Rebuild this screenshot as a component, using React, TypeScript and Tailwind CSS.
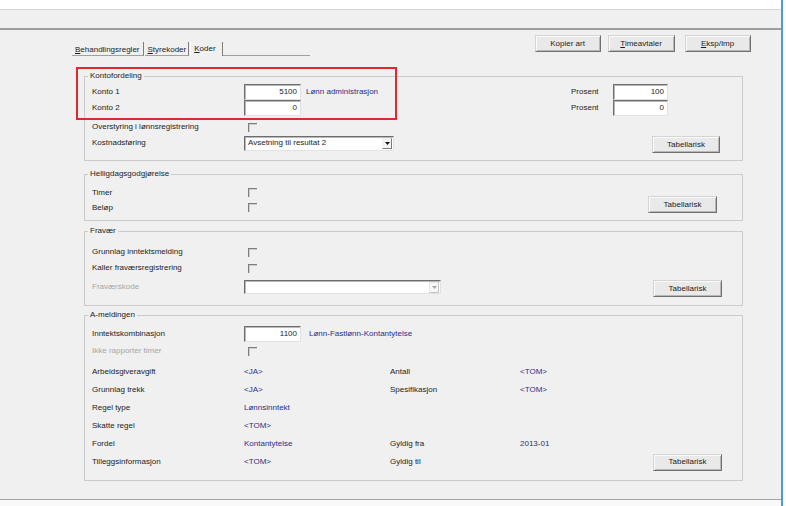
import React from "react";

const blue = "text-[#2b2d8c]";

function Btn({ label, className = "" }: { label: React.ReactNode; className?: string }) {
  return (
    <div
      className={`flex h-[17px] items-center justify-center border border-[#d4d4d4] border-r-[#707070] border-b-[#707070] bg-[#e9e9e9] shadow-[inset_1px_1px_0_#fbfbfb,inset_-1px_-1px_0_#b8b8b8] ${className}`}
    >
      {label}
    </div>
  );
}

function Field({ value, className = "" }: { value: string; className?: string }) {
  return (
    <div
      className={`flex h-[16px] shrink-0 items-center justify-end border border-[#e2e2e2] border-t-[#6d6d6d] border-l-[#6d6d6d] bg-white pr-[3px] shadow-[inset_1px_1px_0_#b9b9b9] ${className}`}
    >
      {value}
    </div>
  );
}

function Check({ className = "" }: { className?: string }) {
  return (
    <div
      className={`h-[9px] w-[9px] shrink-0 border-t border-l border-[#7d7d7d] shadow-[inset_1px_1px_0_#cfcfcf] ${className}`}
    />
  );
}

function Select({ value, className = "", disabled = false }: { value?: string; className?: string; disabled?: boolean }) {
  return (
    <div
      className={`flex shrink-0 items-center border border-[#e2e2e2] border-t-[#6d6d6d] border-l-[#6d6d6d] bg-white shadow-[inset_1px_1px_0_#b9b9b9] ${className}`}
    >
      <span className="flex-1 pl-[3px]">{value}</span>
      <div
        className={`mr-[1px] flex h-[11px] w-[10px] items-center justify-center border ${
          disabled
            ? "border-[#e6e6e6] border-r-[#c4c4c4] border-b-[#c4c4c4] bg-[#f7f7f7]"
            : "border-[#f0f0f0] border-r-[#7a7a7a] border-b-[#7a7a7a] bg-[#f4f4f4]"
        }`}
      >
        <svg width="5" height="3" viewBox="0 0 5 3">
          <polygon points="0,0 5,0 2.5,3" fill={disabled ? "#a8a8a8" : "#111"} />
        </svg>
      </div>
    </div>
  );
}

function Label({ children, dim = false }: { children: React.ReactNode; dim?: boolean }) {
  return <div className={`w-[152px] shrink-0 ${dim ? "text-[#a6a6a6]" : ""}`}>{children}</div>;
}

function Group({ title, className = "", children }: { title: string; className?: string; children: React.ReactNode }) {
  return (
    <fieldset className={`ml-[84px] w-[659px] border border-[#cbcbcb] ${className}`}>
      <legend className="ml-[3px] px-[2px] leading-[12px]">{title}</legend>
      {children}
    </fieldset>
  );
}

function InfoRow({
  label,
  value,
  label2,
  value2,
  button,
  className = "",
}: {
  label: string;
  value?: string;
  label2?: string;
  value2?: string;
  button?: boolean;
  className?: string;
}) {
  return (
    <div className={`flex h-[18px] items-center ${className}`}>
      <Label>{label}</Label>
      <div className={`w-[146px] shrink-0 ${blue}`}>{value}</div>
      <div className="w-[130px] shrink-0">{label2}</div>
      <div className={`w-[133px] shrink-0 ${blue}`}>{value2}</div>
      {button && <Btn label="Tabellarisk" className="w-[69px]" />}
    </div>
  );
}

export default function App() {
  return (
    <div className="flex h-[506px] w-[786px] bg-white font-['Liberation_Sans',Arial,sans-serif] text-[8px] leading-none text-[#1c1c1c]">
      <div className="flex w-[783px] shrink-0 flex-col border-r-2 border-[#4c9be0]">
        <div className="h-[10px] border-b border-[#d6d6d6] bg-white" />
        <div className="h-[20px] border-b-2 border-[#9d9d9d] bg-[#f0f0f0]" />

        <div className="relative h-[470px] border-b border-[#a3a3a3] bg-[#f0f0f0]">
          {/* header: tabs + buttons */}
          <div className="flex h-[40px] items-start">
            <div className="ml-[72px] mt-[12px] flex h-[14px] items-stretch">
              <div className="flex items-center border-b border-r border-[#a0a0a0] border-r-[#7c7c7c] pl-[3px] pr-[3px] pt-[2px]">
                <span>
                  <u>B</u>ehandlingsregler
                </span>
              </div>
              <div className="ml-[1px] flex items-center border-b border-r border-[#a0a0a0] border-r-[#7c7c7c] pl-[3px] pr-[2px] pt-[2px]">
                <span>
                  <u>S</u>tyrekoder
                </span>
              </div>
              <div className="ml-[1px] flex items-start border-r border-l border-l-white border-r-[#7c7c7c] pl-[3px] pr-[6px] pt-[3px]">
                <span>
                  <u>K</u>oder
                </span>
              </div>
              <div className="w-[87px] border-b border-[#a0a0a0]" />
            </div>

            <div className="ml-[225px] mt-[5px] flex">
              <Btn label="Kopier art" className="w-[66px]" />
              <Btn
                label={
                  <span>
                    <u>T</u>imeavtaler
                  </span>
                }
                className="ml-[7px] w-[67px]"
              />
              <Btn
                label={
                  <span>
                    <u>E</u>ksp/Imp
                  </span>
                }
                className="ml-[10px] w-[66px]"
              />
            </div>
          </div>

          {/* Kontofordeling */}
          <Group title="Kontofordeling">
            <div className="flex pb-[7px] pl-[7px] pt-[2px]">
              <div className="w-[479px] shrink-0">
                <div className="flex h-[16px] items-center">
                  <Label>Konto 1</Label>
                  <Field value="5100" className="w-[57px]" />
                  <span className={`ml-[5px] ${blue}`}>Lønn administrasjon</span>
                </div>
                <div className="flex h-[16px] items-center">
                  <Label>Konto 2</Label>
                  <Field value="0" className="w-[57px]" />
                </div>
                <div className="mt-[3px] flex h-[16px] items-center">
                  <Label>Overstyring i lønnsregistrering</Label>
                  <Check className="ml-[4px]" />
                </div>
                <div className="flex h-[16px] items-center">
                  <Label>Kostnadsføring</Label>
                  <Select value="Avsetning til resultat 2" className="h-[15px] w-[150px]" />
                </div>
              </div>
              <div>
                <div className="flex h-[16px] items-center">
                  <span className="w-[42px] shrink-0">Prosent</span>
                  <Field value="100" className="w-[55px]" />
                </div>
                <div className="flex h-[16px] items-center">
                  <span className="w-[42px] shrink-0">Prosent</span>
                  <Field value="0" className="w-[55px]" />
                </div>
                <Btn label="Tabellarisk" className="ml-[81px] mt-[20px] w-[68px]" />
              </div>
            </div>
          </Group>

          {/* Helligdagsgodgjørelse */}
          <Group title="Helligdagsgodgjørelse" className="mt-[7px]">
            <div className="flex pb-[5px] pl-[7px] pt-[5px]">
              <div className="w-[479px] shrink-0">
                <div className="flex h-[15px] items-center">
                  <Label>Timer</Label>
                  <Check className="ml-[4px]" />
                </div>
                <div className="flex h-[15px] items-center">
                  <Label>Beløp</Label>
                  <Check className="ml-[4px]" />
                </div>
              </div>
              <div>
                <Btn label="Tabellarisk" className="ml-[77px] mt-[11px] w-[69px]" />
              </div>
            </div>
          </Group>

          {/* Fravær */}
          <Group title="Fravær" className="mt-[4px]">
            <div className="flex pb-[8px] pl-[7px] pt-[7px]">
              <div className="w-[479px] shrink-0">
                <div className="flex h-[16px] items-center">
                  <Label>Grunnlag inntektsmelding</Label>
                  <Check className="ml-[4px]" />
                </div>
                <div className="flex h-[16px] items-center">
                  <Label>Kaller fraværsregistrering</Label>
                  <Check className="ml-[4px]" />
                </div>
                <div className="mt-[4px] flex h-[14px] items-center">
                  <Label dim>Fraværskode</Label>
                  <Select disabled className="h-[14px] w-[197px]" />
                </div>
              </div>
              <div>
                <Btn label="Tabellarisk" className="ml-[82px] mt-[36px] w-[69px]" />
              </div>
            </div>
          </Group>

          {/* A-meldingen */}
          <Group title="A-meldingen" className="mt-[3px]">
            <div className="pb-[9px] pl-[7px] pt-[5px]">
              <div className="flex h-[16px] items-center">
                <Label>Inntektskombinasjon</Label>
                <Field value="1100" className="w-[57px]" />
                <span className={`ml-[8px] ${blue}`}>Lønn-Fastlønn-Kontantytelse</span>
              </div>
              <div className="flex h-[18px] items-center">
                <Label dim>Ikke rapporter timer</Label>
                <Check className="ml-[4px]" />
              </div>
              <InfoRow className="mt-[3px]" label="Arbeidsgiveravgift" value="<JA>" label2="Antall" value2="<TOM>" />
              <InfoRow label="Grunnlag trekk" value="<JA>" label2="Spesifikasjon" value2="<TOM>" />
              <InfoRow label="Regel type" value="Lønnsinntekt" />
              <InfoRow label="Skatte regel" value="<TOM>" />
              <InfoRow label="Fordel" value="Kontantytelse" label2="Gyldig fra" value2="2013-01" />
              <InfoRow label="Tilleggsinformasjon" value="<TOM>" label2="Gyldig til" button />
            </div>
          </Group>

          {/* highlight marker */}
          <div className="absolute left-[76px] top-[37px] h-[53px] w-[321px] border-2 border-[#e0282e]" />
        </div>

        <div className="flex-1 bg-[#f9f9f9]" />
      </div>
      <div className="flex-1 bg-white" />
    </div>
  );
}
